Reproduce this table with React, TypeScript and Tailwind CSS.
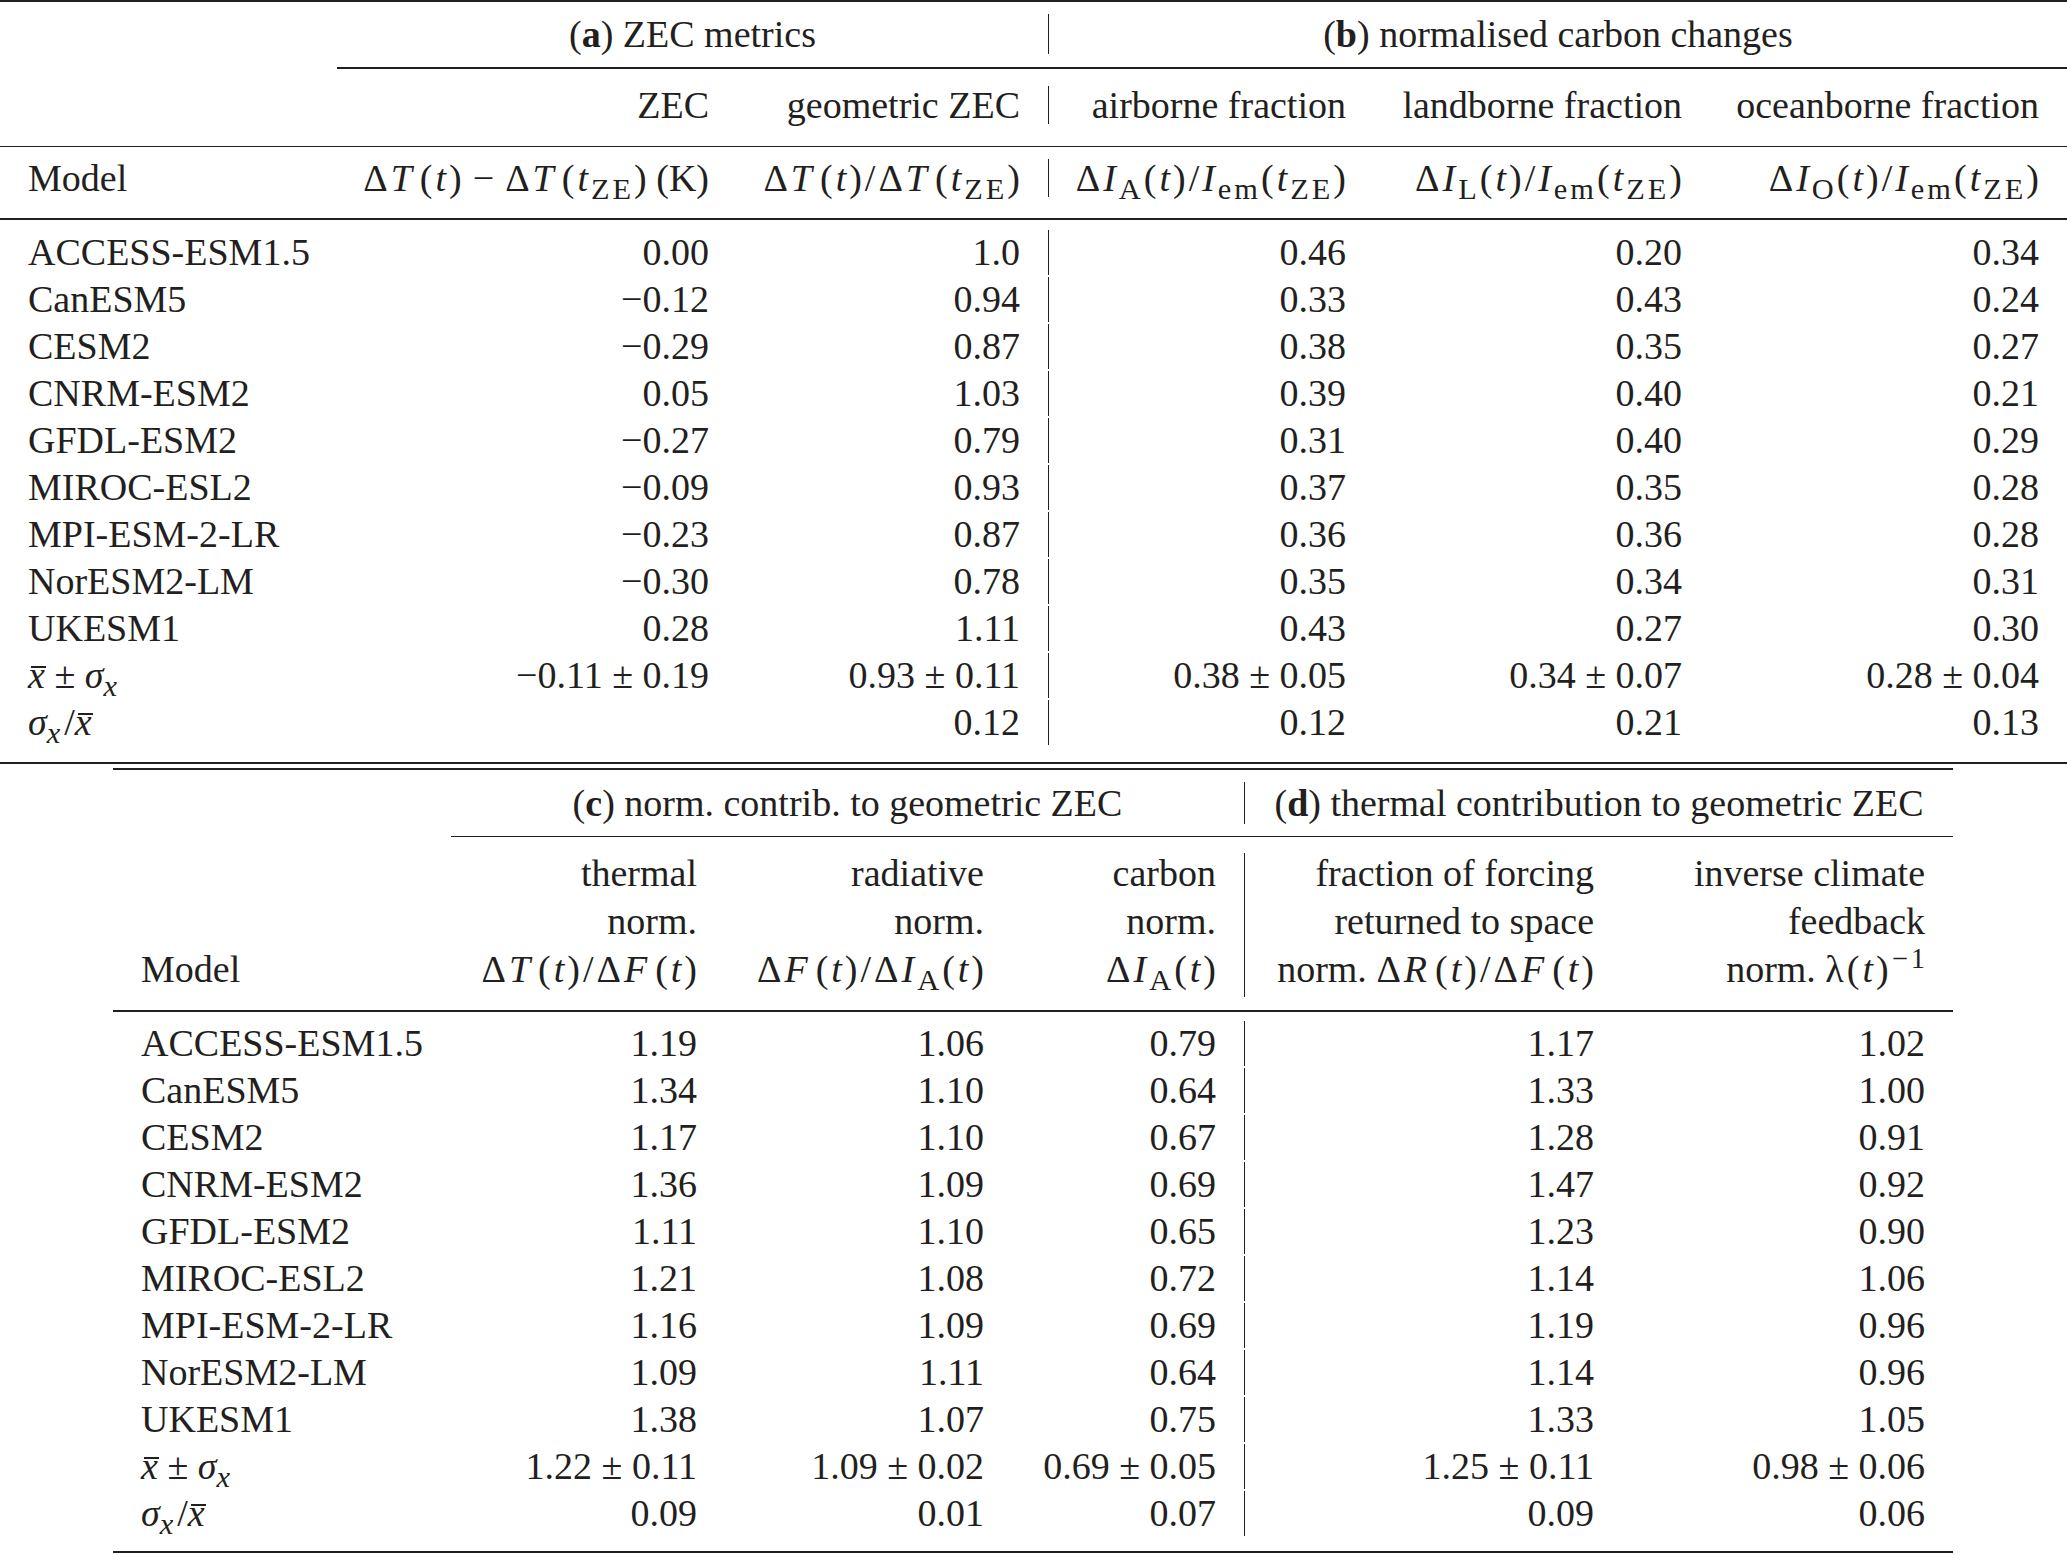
import React from 'react';

type Node = React.ReactNode;

// column templates, widths measured off the reference
const T1 = 'grid grid-cols-[337px_400px_311px_326px_336px_357px]';
const T2 = 'grid grid-cols-[338px_274px_287px_232px_378px_331px]';

// math run: TeX math is set looser than plain text
const M = ({ children }: { children: Node }) => <span className="tracking-[3px] -mr-[3px]">{children}</span>;

const V = ({ children, c }: { children: Node; c?: boolean }) => (
    <i className={c ? 'pr-[5px]' : ''}>{children}</i>
);

const Sub = ({ children }: { children: Node }) => <sub className="text-[80%]">{children}</sub>;

const XBar = () => (
    <span className="relative inline-block">
        <i>x</i>
        <span className="absolute left-[3px] right-[-1px] top-[10px] h-[2px] bg-[#231f20]" />
    </span>
);

const Mean = () => (
    <span>
        <XBar /> ± <i>σ</i>
        <Sub>
            <i>x</i>
        </Sub>
    </span>
);

const Cv = () => (
    <span>
        <i>σ</i>
        <Sub>
            <i>x</i>
        </Sub>
        <span className="pl-[4px]">/</span>
        <XBar />
    </span>
);

const m = '\u2212';

const dT = (
    <>
        Δ<V c>T</V>(<V>t</V>)
    </>
);
const tZE = (
    <>
        (<V>t</V>
        <Sub>ZE</Sub>)
    </>
);
const Iem = (
    <>
        <V>I</V>
        <Sub>em</Sub>
        {tZE}
    </>
);
const dI = (s: string) => (
    <>
        Δ<V>I</V>
        <Sub>{s}</Sub>(<V>t</V>)
    </>
);

const Cell = ({ children, align = 'r', bar }: { children?: Node; align?: 'l' | 'r' | 'c'; bar?: boolean }) => (
    <div
        className={`flex items-center px-[28px] whitespace-nowrap ${align === 'l' ? 'justify-start' : align === 'c' ? 'justify-center' : 'justify-end'} ${bar ? 'border-l border-[#231f20]' : ''}`}
    >
        {children}
    </div>
);

const models = ['ACCESS-ESM1.5', 'CanESM5', 'CESM2', 'CNRM-ESM2', 'GFDL-ESM2', 'MIROC-ESL2', 'MPI-ESM-2-LR', 'NorESM2-LM', 'UKESM1'];

const pm = (a: string, b: string) => `${a} ± ${b}`;

const data1: string[][] = [
    ['0.00', '1.0', '0.46', '0.20', '0.34'],
    [m + '0.12', '0.94', '0.33', '0.43', '0.24'],
    [m + '0.29', '0.87', '0.38', '0.35', '0.27'],
    ['0.05', '1.03', '0.39', '0.40', '0.21'],
    [m + '0.27', '0.79', '0.31', '0.40', '0.29'],
    [m + '0.09', '0.93', '0.37', '0.35', '0.28'],
    [m + '0.23', '0.87', '0.36', '0.36', '0.28'],
    [m + '0.30', '0.78', '0.35', '0.34', '0.31'],
    ['0.28', '1.11', '0.43', '0.27', '0.30'],
    [pm(m + '0.11', '0.19'), pm('0.93', '0.11'), pm('0.38', '0.05'), pm('0.34', '0.07'), pm('0.28', '0.04')],
    ['', '0.12', '0.12', '0.21', '0.13'],
];

const data2: string[][] = [
    ['1.19', '1.06', '0.79', '1.17', '1.02'],
    ['1.34', '1.10', '0.64', '1.33', '1.00'],
    ['1.17', '1.10', '0.67', '1.28', '0.91'],
    ['1.36', '1.09', '0.69', '1.47', '0.92'],
    ['1.11', '1.10', '0.65', '1.23', '0.90'],
    ['1.21', '1.08', '0.72', '1.14', '1.06'],
    ['1.16', '1.09', '0.69', '1.19', '0.96'],
    ['1.09', '1.11', '0.64', '1.14', '0.96'],
    ['1.38', '1.07', '0.75', '1.33', '1.05'],
    [pm('1.22', '0.11'), pm('1.09', '0.02'), pm('0.69', '0.05'), pm('1.25', '0.11'), pm('0.98', '0.06')],
    ['0.09', '0.01', '0.07', '0.09', '0.06'],
];

const labels: Node[] = [...models, <Mean key="mean" />, <Cv key="cv" />];

const Body = ({ cols, rows, barAt }: { cols: string; rows: string[][]; barAt: number }) => (
    <div>
        {rows.map((r, i) => (
            <div key={i} className={`${cols} h-[47px] pb-[2px]`}>
                <Cell align="l">{labels[i]}</Cell>
                {r.map((v, j) => (
                    <Cell key={j} bar={j + 1 === barAt}>
                        {v}
                    </Cell>
                ))}
            </div>
        ))}
    </div>
);

const Line = ({ children }: { children?: Node }) => <div className="h-[48px] pb-[8px] flex items-center">{children}</div>;

const Stack = ({ lines, bar }: { lines: Node[]; bar?: boolean }) => (
    <div className={`flex flex-col items-end justify-end px-[28px] whitespace-nowrap ${bar ? 'border-l border-[#231f20]' : ''}`}>
        {lines.map((l, i) => (
            <Line key={i}>{l}</Line>
        ))}
    </div>
);

export default function App() {
    return (
        <div className="w-[2067px] h-[1555px] overflow-hidden bg-white text-[#231f20] text-[38px] leading-none font-['Liberation_Serif','Times_New_Roman',serif]">
            {/* Table 1: ZEC metrics + normalised carbon changes */}
            <div className="w-[2067px]">
                <div className="h-[2px] bg-[#231f20]" />
                <div className="h-[12px]" />
                <div className={`${T1} h-[47px] pb-[7px]`}>
                    <div />
                    <div className="col-span-2 flex items-center justify-center px-[28px]">
                        (<b>a</b>)&nbsp;ZEC metrics
                    </div>
                    <div className="col-span-3 flex items-center justify-center border-l border-[#231f20]">
                        (<b>b</b>)&nbsp;normalised carbon changes
                    </div>
                </div>
                <div className="h-[6px]" />
                <div className="ml-[337px] h-[1.5px] bg-[#231f20]" />
                <div className="h-[17px]" />
                <div className={`${T1} h-[46px] pb-[8px]`}>
                    <Cell />
                    <Cell>ZEC</Cell>
                    <Cell>geometric ZEC</Cell>
                    <Cell bar>airborne fraction</Cell>
                    <Cell>landborne fraction</Cell>
                    <Cell>oceanborne fraction</Cell>
                </div>
                <div className="h-[14px]" />
                <div className="h-[1.5px] bg-[#231f20]" />
                <div className="h-[12px]" />
                <div className={`${T1} h-[46px] pb-[8px]`}>
                    <Cell align="l">Model</Cell>
                    <Cell>
                        <M>
                            {dT}
                            <span className="px-[8px]">{m}</span>Δ<V c>T</V>
                            {tZE}
                        </M>
                        &nbsp;(K)
                    </Cell>
                    <Cell>
                        <M>
                            {dT}/Δ<V c>T</V>
                            {tZE}
                        </M>
                    </Cell>
                    <Cell bar>
                        <M>
                            {dI('A')}/{Iem}
                        </M>
                    </Cell>
                    <Cell>
                        <M>
                            {dI('L')}/{Iem}
                        </M>
                    </Cell>
                    <Cell>
                        <M>
                            {dI('O')}/{Iem}
                        </M>
                    </Cell>
                </div>
                <div className="h-[13px]" />
                <div className="h-[1.5px] bg-[#231f20]" />
                <div className="h-[10px]" />
                <Body cols={T1} rows={data1} barAt={3} />
                <div className="h-[15px]" />
                <div className="h-[2px] bg-[#231f20]" />
            </div>

            <div className="h-[4px]" />

            {/* Table 2: contributions to geometric ZEC */}
            <div className="ml-[113px] w-[1840px]">
                <div className="h-[2px] bg-[#231f20]" />
                <div className="h-[12px]" />
                <div className={`${T2} h-[47px] pb-[5px]`}>
                    <div />
                    <div className="col-span-3 flex items-center justify-center">
                        (<b>c</b>)&nbsp;norm. contrib. to geometric ZEC
                    </div>
                    <div className="col-span-2 flex items-center justify-center border-l border-[#231f20]">
                        (<b>d</b>)&nbsp;thermal contribution to geometric ZEC
                    </div>
                </div>
                <div className="h-[7px]" />
                <div className="ml-[338px] h-[1.5px] bg-[#231f20]" />
                <div className="h-[16px]" />
                <div className={`${T2} h-[144px]`}>
                    <div className="flex flex-col justify-end px-[28px]">
                        <Line>Model</Line>
                    </div>
                    <Stack
                        lines={[
                            'thermal',
                            'norm.',
                            <M>
                                {dT}/Δ<V c>F</V>(<V>t</V>)
                            </M>,
                        ]}
                    />
                    <Stack
                        lines={[
                            'radiative',
                            'norm.',
                            <M>
                                Δ<V c>F</V>(<V>t</V>)/{dI('A')}
                            </M>,
                        ]}
                    />
                    <Stack lines={['carbon', 'norm.', <M>{dI('A')}</M>]} />
                    <Stack
                        bar
                        lines={[
                            'fraction of forcing',
                            'returned to space',
                            <>
                                norm.&nbsp;
                                <M>
                                    Δ<V c>R</V>(<V>t</V>)/Δ<V c>F</V>(<V>t</V>)
                                </M>
                            </>,
                        ]}
                    />
                    <Stack
                        lines={[
                            'inverse climate',
                            'feedback',
                            <>
                                norm.&nbsp;
                                <M>
                                    λ(<V>t</V>)<sup>{m}1</sup>
                                </M>
                            </>,
                        ]}
                    />
                </div>
                <div className="h-[13px]" />
                <div className="h-[1.5px] bg-[#231f20]" />
                <div className="h-[9px]" />
                <Body cols={T2} rows={data2} barAt={4} />
                <div className="h-[13px]" />
                <div className="h-[2px] bg-[#231f20]" />
            </div>
        </div>
    );
}
